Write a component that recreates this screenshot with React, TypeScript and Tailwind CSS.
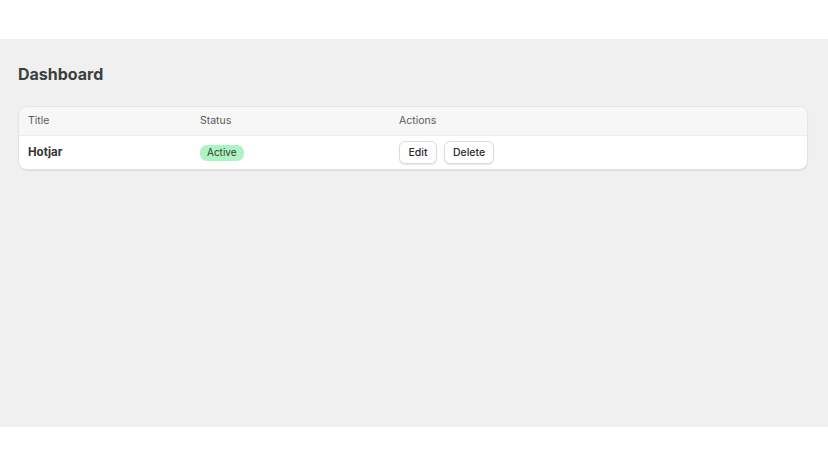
export default function App() {
  return (
    <div className="w-[828px] h-[466px] bg-white font-['Inter',sans-serif]">
      <div className="h-[39px]" />
      <main className="h-[388px] bg-[#f0f0f0] px-[18px] pt-[24px]">
        <h1 className="text-[16px] leading-[22px] font-bold text-[#3b3f3d]">Dashboard</h1>

        <div className="mt-[21px] w-[790px] bg-white rounded-[9px] border border-[#e4e4e4] shadow-[0_1px_1px_rgba(0,0,0,0.08)] overflow-hidden">
          <div className="flex items-center h-[29px] px-[9px] bg-[#f7f7f7] border-b border-[#ececec] text-[10.5px] text-[#5a5a5a]">
            <div className="w-[172px]">Title</div>
            <div className="w-[199px]">Status</div>
            <div>Actions</div>
          </div>
          <div className="flex items-center h-[33px] px-[9px]">
            <div className="w-[172px] text-[11.5px] font-bold text-[#333]">Hotjar</div>
            <div className="w-[199px] flex items-center">
              <span className="flex items-center h-[16px] px-[7px] rounded-[7px] bg-[#aef4c2] text-[10px] text-[#2c3e31]">
                Active
              </span>
            </div>
            <div className="flex gap-[7px]">
              <button className="h-[23px] w-[38px] rounded-[6px] border border-[#dcdcdc] bg-white shadow-[0_1px_1px_rgba(0,0,0,0.1)] text-[10.5px] font-medium text-[#2d2d2d]">
                Edit
              </button>
              <button className="h-[23px] w-[50px] rounded-[6px] border border-[#dcdcdc] bg-white shadow-[0_1px_1px_rgba(0,0,0,0.1)] text-[10.5px] font-medium text-[#2d2d2d]">
                Delete
              </button>
            </div>
          </div>
        </div>
      </main>
    </div>
  );
}
